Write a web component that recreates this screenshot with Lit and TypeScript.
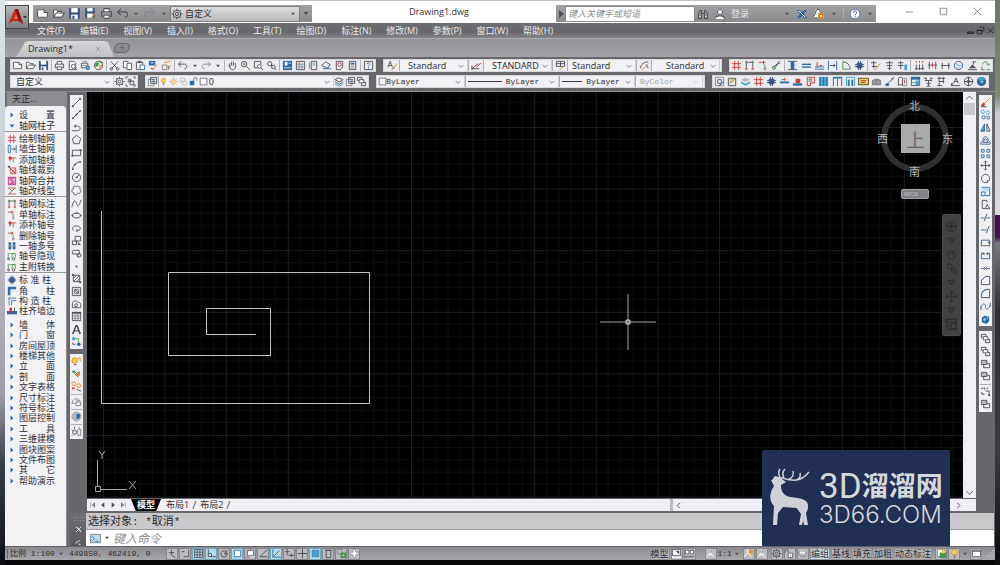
import { LitElement, html, svg, css, nothing, type TemplateResult } from "lit";
import { customElement, state } from "lit/decorators.js";

/* ---------- icon set ----------
   Each icon is a list of strokes on a 12 x 12 grid, separated by "|".
   First letter = colour, "!" = filled shape, "@x,y,r" = circle. */
const INK: Record<string, string> = {
  k: "#505057", g: "#85858c", l: "#b9b9bf", w: "#ffffff", r: "#cc3a3a", b: "#2c6aa8",
  c: "#45a5cf", n: "#3f9a4a", o: "#de8f2c", y: "#f2cf4a", m: "#d9479a", v: "#3f5688", s: "#b9dcec",
};

const GRID = "r M4 1V11M8 1V11M1 4H11M1 8H11";
const SHEET = "w! M2 1H8L10 3V11H2Z|k M2.5 1.5H7.5L9.5 3.5V10.5H2.5Z";
const ICONS: Record<string, string> = {
  new: "w! M1 2H8L11 5V10H1Z|k M1.5 2.5H7.5L10.5 5V9.5H1.5Z|k M7.5 2.5V5H10.5",
  open: "w! M1 2H5L6 4H10V9H1Z|k M1.5 9.5V2.5H4.5L5.5 4H9V5.5|k M1.5 9.5L4 5.5H11.5L9 9.5Z",
  save: "v! M1 1H11V11H1Z|w! M3 1H9V5H3Z|w! M3 7H9V11H3Z|v! M4 8H6V11H4Z",
  saveas: "v! M1 1H10V10H1Z|w! M3 1H8V4H3Z|w! M3 6H8V10H3Z|o M6 11L11 5",
  print: "w! M3 1H9V5H3Z|k M3.5 4.5V1.5H8.5V4.5|k M1.5 4.5H10.5V8.5H1.5Z|w! M3 7H9V11H3Z|k M3.5 7.5H8.5V10.5H3.5Z",
  preview: SHEET + "|w! @7,7,2.5|k @7,7,2.2|k M8.5 8.5L11 11",
  publish: "k M1.5 3.5H8.5V8.5H1.5Z|g M3 1.5H7V3M3 6H7|b! @8.5,8.5,2.4|w M7.5 8.5H9.5",
  globe: "k @6,6,4.5|n! M3 3H7L5 7H2Z|o! M7 5L10 6L7 10Z|k M7 1L11 3",
  cut: "k M2 1.5L9 9M10 1.5L3 9|k @2.5,9.7,1.3|k @9.5,9.7,1.3",
  copy: "w! M1 1H7V9H1Z|k M1.5 1.5H6.5V8.5H1.5Z|w! M5 3H11V11H5Z|k M5.5 3.5H10.5V10.5H5.5Z",
  paste: "k M1.5 2.5H8.5V10.5H1.5Z|k! M3 1H7V3H3Z|w! M5 5H11V11H5Z|b M5.5 5.5H10.5V10.5H5.5Z",
  match: "b! M1 1H8V6H1Z|w M3 3H6|o M5 11L10 5|k M3 9L6 10",
  block: "g M1.5 5.5H6.5V10.5H1.5Z|o M3 3L8 2L11 1M6 8L11 6|k M8.5 7V10.5",
  undo: "k M4.5 1.5L1.5 4.5L4.5 7.5M1.5 4.5H8C11.5 4.5 11.5 9.5 8 9.5",
  redo: "g M7.5 1.5L10.5 4.5L7.5 7.5M10.5 4.5H4C.5 4.5 .5 9.5 4 9.5",
  dot: "k! M3 4H9L6 8Z",
  pan: "k M3 7L1.5 5.5M3 8V3.5M5 6V1.8M7 6V2M9 6V3.2M3 7C3.5 12 9.5 12 9.5 6",
  zoom: "k @4.5,4.5,3|k M7 7L11 11|n M3 4.5H6M4.5 3V6",
  zoomwin: "k M1.5 1.5H8.5V8.5H1.5Z|w! @7,7,2.5|k @7,7,2|k M8.5 8.5L11 11",
  zoomprev: "k @4,4,2.3|k @8,7.5,2|k M5.5 5.5L7 7M9.5 9L11 11",
  props: "b! M1 1H11V11H1Z|w! M3 2H6V6H3Z|s M2 8.5H10M7 3.5H10",
  center: "k M1.5 1.5H10.5V10.5H1.5Z|g M1.5 4.5H10.5M4.5 1.5V10.5M7.5 4.5V10.5M1.5 7.5H10.5",
  palette: "k M3.5 1.5H9.5V10.5H3.5Z|c M5 3.5H8M5 5.5H8|g M1.5 2.5V9.5",
  sheetset: "k M1 6L5 2L10 5L7 9Z|b M2 9.5H11",
  markup: "k M2.5 1.5H9.5V7.5L7 10.5H2.5Z|r @6,5,2",
  calc: "k M2.5 1.5H9.5V10.5H2.5Z|b! M4 3H8V5H4Z|g M4 6.7H8M4 8.7H8",
  help: "k M1.5 1.5H10.5V10.5H1.5Z|b M4.5 4.5C4.5 2.5 7.5 2.5 7.5 4.5C7.5 5.5 6 5.5 6 7M6 8V9.4",
  textstyle: "k M1 8L3.5 1.5L6 8M2 6H5|o M5 11L11 4|k M6 10L8 8",
  dimstyle: "k M1 9.5H9M1 6V11M1 9.5L8 4|r M6 8L11 3",
  tblstyle: "k M1.5 1.5H10.5V7H1.5ZM1.5 4H10.5M6 1.5V7|o M5 11L10 6",
  mlstyle: "k M2 9C1 5 6 2 10 2|o M3 11L10 4|k M8 5L10 9",
  axis: GRID,
  axisdim: "k M2 2.5H10M2.5 2V8M9.5 2V8|r @2.5,9.5,1|r @9.5,9.5,1|n @2.5,2,.8|n @9.5,2,.8",
  axisone: "r M1 2.5H8M6 1V5|n M7.5 5V9|g @7.5,9.7,1.2",
  axisadd: "r M1 3.5H11M3.5 1V8|r! @4,4,1.8|n M7.5 3V9",
  trim: "k M1 8L10 3M3 11L9 1|n @3,9,1.4",
  ibeam: "k M1 1.5H11M1 10.5H11|b! M4 2H8V10H4Z",
  wall: "b! M1 4H11V5.5H1Z|b! M1 7H11V8.5H1Z",
  wall2: "b M1 10H11M1 7.5H11|r M3.5 2V8M6 6H9",
  wall3: "b M1.5 1V11M10.5 1V11|k M3 6H9M7 4.5L9 6L7 7.5",
  arcwall: "n M2 2V10H10|k M2 2C7 2 10 6 10 10",
  column: "v! M3 3H9V9H3Z|v M1 5H11M1 7H11M5 1V11M7 1V11",
  edit1: "k M1 3H7M4 1V9M2 7H8|o M5 11L11 4",
  edit2: "k M2 3H10M3 6H9M6 1V11M4 9H8",
  edit3: "k M1 3H7M4 1V10M1 6H7|c! M8 5H11V11H8Z",
  dims3: "k M2.5 5V11M6 5V11M9.5 5V11|r M2.5 1V3M6 1V3M9.5 1V3|k M1 9.5H11",
  dims2: "k M2.5 2V10M9.5 2V10M1 5.5H11|r M6 3V8",
  dims1: "k M2.5 3V10M9.5 3V10M1 6H11",
  clock: "v @6,6,4.5|c M3.5 4L6 6H9|l M4 8.5H8",
  elev: "k! M2 9L6 5L10 9Z|k M6 2H10M1 10.5H11M7 2V5",
  recycle: "n M3 5C3 1 9 1 9 5M7 4L9 6L11 4M1 10.5H5M7 10.5H11M2 7V10",
  layers: "k M1 4L5 2L10 4L6 6.5ZM1 6.5L6 9L10 6.5|c M1 9L6 11L10 9",
  layerst: "g M1.5 3.5H7.5V10.5H1.5Z|k M4 1.5H10.5V8H4Z|b M5 4H9M5 6H9",
  bulb: "o @6,4.5,3|y! @6,4.5,2.6|k M5 8.5H7M5 10.5H7",
  sun: "o @6,6,2.3|o M6 .5V2.5M6 9.5V11.5M.5 6H2.5M9.5 6H11.5M2 2L3.3 3.3M8.7 8.7L10 10M10 2L8.7 3.3M2 10L3.3 8.7",
  vp: "l M1.5 1.5H7.5V6.5H1.5ZM4.5 5.5H10.5V10.5H4.5Z",
  lock: "b! M1 5H7V11H1Z|k M6.5 5V2.5C6.5 0 10.5 0 10.5 2.5V5",
  sq: "w! M1 1H11V11H1Z|k M1.5 1.5H10.5V10.5H1.5Z",
  gear: "k @6,6,1.6|k @6,6,3.7|k M6 .7V2.3M6 9.7V11.3M.7 6H2.3M9.7 6H11.3M2.2 2.2L3.4 3.4M8.6 8.6L9.8 9.8M9.8 2.2L8.6 3.4M2.2 9.8L3.4 8.6",
  group: "k M1 3V1H3M9 1H11V3M11 9V11H9M3 11H1V9|g! M3 3H7V7H3Z|k M5.5 5.5H9.5V9.5H5.5Z",
  pic: "g M1.5 1.5H10.5V10.5H1.5Z|b M4 4H8V8H4Z|k M5 11L11 6",
  pic2: "k M1.5 2.5H9.5V10.5H1.5Z|n M3 8L9 3|o @5,5,1.5",
  stack: "l! M1 4L6 2L11 4L6 6.5Z|c! M1 6L6 8.5L11 6V8L6 10.5L1 8Z",
  wallb: "b! M1 6H11V8H1Z|b M3 4H7|r M6 2V5",
  wallr: "r! M4 3H9V8H4Z|b! M1 8H11V10.5H1Z",
  door: "r M2.5 1.5H10.5V7.5H6V10.5H2.5Z|k M4 3.5H8M4 5.5H8",
  cols: "c! M1 1H11V11H1Z|b M2.5 1V11M6 1V11M9.5 1V11",
  door2: "c! M1 1H11V3H1Z|b M1.5 11V1.5H10.5V11M6 3V11",
  win: "c M1.5 11V1.5H10.5V11|b! M3 4H5V11H3Z|b! M7 4H9V11H7Z",
  mail: "y! M0 2H12V10H0Z|k M.5 2.5H11.5V9.5H.5Z|r M3 5H9|k M3 7H8",
  house: "g! M1 5L4 3H8L11 5V10H1Z|l! M3 6H5V8H3Z|l! M7 6H9V8H7Z",
  slope: "k M1 9.5H6M8 3L11 2|b M3 9L10 3|b! M2 8H5V11H2Z",
  book: "k M1.5 2.5C3 1 5 1 6 2.5V10.5C5 9 3 9 1.5 10.5Z|g M6 2.5H10.5V10.5H6|r M8.3 4V8",
  table: "k M1.5 1.5H10.5V10.5H1.5Z|b! M1 1H11V4H1Z|c! M6 5H10V10H6Z|g M1.5 7H6",
  fan: "k M1 2.5H4M8 2.5H11M2 5H10M6 5V11M3.5 8H8.5M4 11H8M3 2L4 5M9 2L8 5",
  flag: "k M3.5 1V11M1.5 2.5H10M3.5 6H9M1.5 10.5H7M8 1V8",
  txa: "k M4 8L6.5 2L9 8M5 6H8M1 10.5H11|k! M1 8H3V10H1Z",
  target: "k @6,6,4.5|k @6,6,1.5|k M6 1V11M1 6H11",
  help3d: "b! @6,6,5|c! M2 3L7 1L10 4L5 6Z|w! M5 6H8V7H5Z",
  wallgen: "b M1.5 1.5H4V10.5H1.5ZM11 1V11|k M5 6H10M8 4.5L10 6L8 7.5",
  axiscut: "k! M1 1H4V3H1Z|k M2 2L10 10|r M4.5 3.5H10.5V10.5H4.5Z|r M6 9L10 4M8 10L10 7",
  axismerge: "m! M1 1H11V11H1Z|w M3.5 3V9M8.5 3V9M2 7H6M6 4H10",
  axisline: "r M1 2.5H11M1 9.5H11|k M3 9L9 3|g M3 3L6 6",
  axischeck: "n M1.5 2V9M6 5V9|k @2,9.5,1.2|k @8,9.5,1.5|n M3 3H10V8M6 5L9 2",
  axisnum: "b! @3.5,3,1.8|b! @8.5,3,1.8|b! @3.5,8.5,1.8|b! @8.5,8.5,1.8|v M3.5 3V9M8.5 3V9M1 6H11",
  angle: "b! M1 1H11V4H4V11H1Z|c M2 7H4M7 2V4",
  column3: "b M2 2.5H11M2.5 2V11M5.5 5.5H11M5.5 5.5V11",
  colalign: "b! M0 6H12V10H0Z|r! M3 2H6V9H3Z|k M9 2V8",
  line: "k M2 10L10 2|k! M1 9H3V11H1Z|k! M9 1H11V3H9Z",
  xline: "k M2 10L10 2|k! @6,6,1.2|k! @2,10,1|k! @10,2,1",
  pline: "k M1 9.5H7C11 9.5 11 4.5 7 4.5H4M5.5 3L3.5 4.5L5.5 6",
  polygon: "k M6 1.5L10.5 5L9 10.5H3L1.5 5Z",
  rect: "k M1.5 3.5H10.5V9.5H1.5Z|k! M.5 8.5H2.5V10.5H.5Z|k! M9.5 2.5H11.5V4.5H9.5Z",
  arc: "k M2 10C2 6 5 3 10 2|k! @2,10,1|k! @10,2,1|k! @4.4,5,1",
  circle: "k @6,6,4.5|k M6 6L9 3|k! @6,6,1",
  cloud: "k M3 4C1 1 5 .5 6 2C8 .5 11 2 9.5 4.5C12 6 10 10 7.5 9C6 12 2 11 3 8.5C0 8 .5 4 3 4Z",
  spline: "k M1 10C3 1 5 2 6 6C7 10 9 9 11 2",
  ellipse: "k M1.5 6C1.5 2.5 10.5 2.5 10.5 6C10.5 9.5 1.5 9.5 1.5 6Z|k! @6,3.4,1|k! @10.5,6,1|k! @1.5,6,1",
  earc: "k M3 8.5C-1 5 4 2 8 3.5C12 5 10 9 6 8.5M7 7L5.5 8.5L7 10",
  insert: "k M4.5 1.5H10.5V6.5H4.5Z|k M1.5 6.5H6V10.5H1.5Z|k! M7 7L11 11H8Z",
  mkblock: "k M2.5 2.5H9V6.5H1.5V4ZM6 7L8 10.5|k @9,8,1.8",
  point: "k! M5 5H7V7H5Z",
  hatch: "k M2.5 2.5H9.5V9.5H2.5ZM2.5 6L6 2.5M3 9L9 3M6 9.5L9.5 6|k! M1 1H3V3H1Z|k! M9 9H11V11H9Z",
  grad: "g! M3 3H9V9H3Z|k M1.5 1.5H10.5V10.5H1.5Z|w M4 8L8 4",
  region: "k M1.5 9.5V4.5C1.5 2 6 1 7 3.5C10 3 11 5 10.5 9.5Z|k @5.5,6.8,1.6",
  tbl: "k M1.5 1.5H10.5V10.5H1.5Z|k! M1 1H11V3H1Z|g M4.5 3V10M7.5 3V10M1.5 5.5H10.5M1.5 8H10.5",
  mtext: "k! M4.9 1H7.1L11 11H9L8.1 8.3H3.9L3 11H1ZM4.4 6.7H7.6L6 2.6Z",
  addsel: "c! @3,3,2|n M5 3H8V7|b! @8.5,9,2|k M2 7V9H5",
  iso1: "y! @4,5,3|o @4,5,3|o M7 3L10 2V6|k M3 9.5H6",
  iso2: "k M3 2L6 5L10 3M4 5L8 9|o! @8,6,2|n! @3,3,1.5",
  iso3: "o @3,3,2|o @8.5,5,2|r! M1 7H4V9H1Z|k M6 9L11 11",
  locklay: "g M1 8C2 3 6 2 8 4M1 8H5|g M5.5 6.5H10.5V10.5H5.5ZM6.5 6V4.5H9.5V6",
  world: "g @6,6,4.8|l! @6,6,4.4|b! M6 3L10 3.5L9.5 8L6 9Z",
  sunx: "k @4,7,2.2|k M4 1V3.5M1 4L2.5 5.5M1 10.5L2 9.5|g M7.5 3.5H10.5V10.5H7.5ZM9 1V3",
  erase: "o M4 8L11 1|r! M1 9L4 6L6 8L3 11Z|k M1 10.5H7",
  copyo: "c @3,3,1.8|c @8.5,4,1.8|b @4,9,1.8|b @9,9.3,1.6",
  mirror: "c! M5 2V10H1Z|b M5 2V10H1Z|k M7.5 2V10H11Z",
  offset: "b M1 10H11V8C11 7 9 7 9 6C9 .5 3 .5 3 6C3 7 1 7 1 8Z|k M3 8H9C7 7 8 4 6 4C4 4 5 7 3 8",
  array: "b M1.5 1.5H4.5V4.5H1.5ZM7.5 1.5H10.5V4.5H7.5ZM1.5 7.5H4.5V10.5H1.5ZM7.5 7.5H10.5V10.5H7.5Z",
  move: "k M6 1V11M1 6H11M4.5 2.5L6 1L7.5 2.5M4.5 9.5L6 11L7.5 9.5M2.5 4.5L1 6L2.5 7.5M9.5 4.5L11 6L9.5 7.5",
  rotate: "k M5 10.5C-1 8 2 1.5 6 1.5C11 1.5 12 8 8 10M8 7.5V10.5H5",
  scale: "b M1.5 1.5H10.5V10.5H6|b M1.5 10.5V6.5H5.5V10.5Z|s! M2 2H10V6H6V5H2Z",
  stretch: "k M2.5 1.5H7.5V4M2.5 1.5V10.5H10.5L7.5 5.5|b M6 10L8 6",
  trimm: "b M1 6.5H5M7 6.5H11|k M4.5 10L7.5 2",
  extend: "b M1 6.5H7|k M7 10L10 2",
  brkpt: "b M1.5 9.5V3.5H10.5V9.5|w! M2 8H10V11H2Z|k! M9 5H11V7H9Z|k M1 9.5H11",
  brk: "b M4 3.5H1.5V9.5H10.5V3.5H8|k! M3 3H5V5H3Z|k! M7 3H9V5H7Z",
  join: "b M1 6H4M8 6H11|k M4 4.5L6 6L4 7.5M8 4.5L6 6L8 7.5",
  chamfer: "k M1.5 10.5H10.5V1.5H6L1.5 6Z|b M6 1.5L1.5 6",
  fillet: "k M1.5 10.5H10.5V1.5H8C4 1.5 1.5 5 1.5 8Z|b M8 1.5C4 1.5 1.5 5 1.5 8",
  blend: "k M1 10V6M11 2V6|b M1 7C4 0 6 4 6 6C6 9 8 11 11 5",
  explode: "b! M2 4L5 2L10 3V8L7 11L2 9Z|s! @5,6,1.3|s M7 5L9 4",
  order: "k M1.5 1.5H6.5V5H1.5Z|w! M3 4H9V8H3Z|k M3.5 4H8.5V7.5H3.5Z|k M6 8V10.5H10.5V7H8.5",
  order2: "l! M2 2H8V6H2Z|k M1.5 1.5H7.5V6H1.5Z|k M4 6V9.5H10.5V5H8",
  ordertx: "k M1 2.5H4M5 1.5V4M7 2.5H9M2 6.5V9H5M6 5.5H10V9.5|k! @10,10,1.2",
  snap: "k M5 2V8M2 5H8M5 8L9 10",
  snap2: "k M9.5 2V9.5H4M2 4H5",
  mesh: "k M1.5 1.5H10.5V10.5H1.5ZM4.5 1.5V10.5M7.5 1.5V10.5M1.5 4.5H10.5M1.5 7.5H10.5",
  ortho: "k M2.5 1.5V9.5H11|b M2.5 6H6V9.5",
  polar: "k @5.5,6.5,3.5|k M5.5 6.5L10 2M5.5 6.5H9",
  osnap: "w! M2 2H10V10H2Z|b M2.5 2.5H9.5V9.5H2.5Z",
  osnap3: "w! M2 2H10V10H2Z|k M2.5 2.5H9.5V8.5H2.5Z|r M1 10H5",
  ang: "k M10 2L2 9.5H10.5",
  ucsd: "b M2 1.5V10H11M2 10L9 3|o M5 5L8 8",
  dyn: "k M1 4H6M3.5 1V8M5 8H11M8 6V10",
  plus: "k M6 1V11M1 6H11M6 4V8",
  tpy: "b M2.5 2.5H9.5V9.5H2.5Z|c! M3 3H9V9H3Z",
  qp: "k M3.5 2.5H8.5V10.5H3.5ZM2 2.5H10",
  sc: "g M1.5 1.5H6.5V6.5H1.5Z|n! M5 5H11V11H5Z|w M7 8H9",
  bigplus: "w! M4 1H8V4H11V8H8V11H4V8H1V4H4Z|g M4.5 1.5H7.5V4.5H10.5V7.5H7.5V10.5H4.5V7.5H1.5V4.5H4.5Z",
  mview: "w! M1 1H11V11H1Z|k M1.5 1.5H10.5V8.5H1.5Z|k! M5 3H9V7Z",
  qview: "w! M1 2H11V7H1Z|k M1.5 2.5H5.5V6.5H1.5ZM6.5 2.5H10.5V6.5H6.5ZM1 9.5H11",
  anno: "w M6 1V5L2 10M6 5L10 10M4 7.5H8|g M6.5 2V5",
  annob: "w M5 1V5L1 10M5 5L9 10|o! @9,4,2|y! @8,7,1.5",
  unlock: "w! M4 5H10V11H4Z|k M4.5 5.5H9.5V10.5H4.5ZM4.5 5V3C4.5 1 1.5 1 1.5 3V5|g M7 7V9",
  iso: "g M1.5 4.5C1.5 11 10.5 11 10.5 4.5Z|w! M3 4H9V6H3Z",
  hw: "w! M1 1H10V9H1Z|g M1.5 1.5H9.5V9.5H1.5Z|n! M4 5H11V11H4Z|y! @8,4,2",
  clean: "w! M1 2H11V10H1Z|k M1.5 2.5H10.5V9.5H1.5Z|k M1 3.5H11",
  grip: "l! M9 2H11V4H9Z|l! M6 5H8V7H6Z|l! M9 5H11V7H9Z|l! M3 8H5V10H3Z|l! M6 8H8V10H6Z|l! M9 8H11V10H9Z",
  bino: "k M1.5 10.5V6L3 2.5H4.5V10.5ZM10.5 10.5V6L9 2.5H7.5V10.5ZM4.5 5.5H7.5|w M2.5 8.5H3.5M8.5 8.5H9.5",
  user: "w! @6,4,3|k @6,4,2.6|w! M1 11C1 8 11 8 11 11Z|k M1 10.5C2 8 4 8.5 5 7M7 7C8 8.5 10 8 11 10.5Z",
  xch: "b! M1 2H4L6 4.5L8 2H11L8 6L11 10H8L6 7.5L4 10H1L4 6Z|w M3 3L9 9",
  share: "w! M3 1H7L8 5L6 9H1V7Z|k M3.5 1.5H6.5L7.5 5M1 8.5L3.5 2|o! M5 5H11V11H5Z|w! M7 7H9V9H7Z",
  qhelp: "w! @6,6,5.4|v @6,6,5|v M4.3 4.8C4.3 2.4 7.7 2.4 7.7 4.7C7.7 6 6 5.9 6 7.3M6 8.3V9.6",
  mdimin: "k! M2 8H10V10H2Z",
  mdirest: "k M4.5 1.5H10.5V6.5H8M1.5 5.5H7.5V10.5H1.5ZM1.5 6H7.5",
  close: "k M2.5 2.5L9.5 9.5M9.5 2.5L2.5 9.5",
  thinmin: "g M2 6.5H10",
  thinmax: "g M2.5 2.5H9.5V9.5H2.5Z",
  thinclose: "g M2 2L10 10M10 2L2 10",
  wrench: "w M3 9C1 6 7 7 8 4M6 9.5H8V11",
  wclose: "w M2.5 2.5L9.5 9.5M9.5 2.5L2.5 9.5M3.5 2.5L9.5 8.5",
  first: "g M2.5 2V10|g! M9 2V10L4 6Z",
  prev: "k! M8 2V10L3 6Z",
  next: "k! M4 2V10L9 6Z",
  last: "g M9.5 2V10|g! M3 2V10L8 6Z",
  left: "k M7.5 3L4.5 6L7.5 9",
  right: "k M4.5 3L7.5 6L4.5 9",
  up: "k M2.5 8L6 4.5L9.5 8",
  down: "k M2.5 4.5L6 8L9.5 4.5",
  prompt: "s! M0 1H12V11H0Z|g M.5 1.5H11.5V10.5H.5Z|b M2.5 3.5L5 6L2.5 8.5M6 9H9",
  folded: "b! M3 1L9 6L3 11Z",
  unfolded: "b! M1 3H11L6 9Z",
};

const circle = (_: string, x: string, y: string, r: string) =>
  `M${+x - +r} ${y}a${r} ${r} 0 1 0 ${2 * +r} 0a${r} ${r} 0 1 0 ${-2 * +r} 0Z`;

const icon = (name: string): TemplateResult => html`<svg class="ic" viewBox="0 0 12 12" aria-hidden="true">
  ${(ICONS[name] ?? "").split("|").map((part) => {
    const ink = INK[part[0]];
    const fill = part[1] === "!";
    const d = part.slice(fill ? 2 : 1).trim().replace(/@([\d.]+),([\d.]+),([\d.]+)/g, circle);
    return svg`<path d=${d} fill=${fill ? ink : "none"} stroke=${fill ? "none" : ink}></path>`;
  })}
</svg>`;

/* "|" in a list of names stands for a separator. */
const strip = (names: string) =>
  names.split(" ").map((n) =>
    n === "|" ? html`<i class="sep"></i>`
      : html`<button class=${n === "dot" ? "tool tiny" : "tool"} aria-label=${n}>${icon(n)}</button>`);

type Row = [string, string];
const TREE: Row[][] = [
  [["folded", "设　　置"], ["unfolded", "轴网柱子"]],
  [["axis", "绘制轴网"], ["wallgen", "墙生轴网"], ["axisadd", "添加轴线"], ["axiscut", "轴线裁剪"],
   ["axismerge", "轴网合并"], ["axisline", "轴改线型"]],
  [["axisdim", "轴网标注"], ["axisone", "单轴标注"], ["axisadd", "添补轴号"], ["axisone", "删除轴号"],
   ["axisnum", "一轴多号"], ["axischeck", "轴号隐现"], ["axischeck", "主附转换"]],
  [["column", "标 准 柱"], ["angle", "角　　柱"], ["column3", "构 造 柱"], ["colalign", "柱齐墙边"]],
  ["墙　　体", "门　　窗", "房间屋顶", "楼梯其他", "立　　面", "剖　　面", "文字表格", "尺寸标注", "符号标注",
   "图层控制", "工　　具", "三维建模", "图块图案", "文件布图", "其　　它", "帮助演示"].map((t): Row => ["folded", t]),
];

const MENUS = ["文件(F)", "编辑(E)", "视图(V)", "插入(I)", "格式(O)", "工具(T)", "绘图(D)", "标注(N)", "修改(M)",
  "参数(P)", "窗口(W)", "帮助(H)"];

@customElement("app-root")
export class AppRoot extends LitElement {
  @state() private layout = "模型";

  static styles = css`
    :host {
      display: block;
      font: 9px/10px "Open Sans", "Noto Sans CJK SC", sans-serif;
      color: #2c2c30;
    }
    * { box-sizing: border-box; }
    button, input, select { font: inherit; color: inherit; border: 0; margin: 0; padding: 0; background: none; border-radius: 0; }
    button { display: flex; align-items: center; justify-content: center; white-space: nowrap; }
    ul { list-style: none; margin: 0; padding: 0; }
    .ic { display: block; width: 11px; height: 11px; flex: none; stroke-width: 1; }
    .desktop {
      height: 100vh; padding: 0 5px 5px; display: flex;
      background:
        linear-gradient(#d9e8e8, #ccd6da 20%, #bfbcc8 45%, #9c9aa6 70%, #39404c 82%, #0b0d12) left / 5px 100% no-repeat,
        linear-gradient(#6f7660, #81896f 17%, #c9cbd0 20%, #d9dbe0 38%, #4a0b58 38%, #4a0b58 42%, #77787e 43%, #2f3135 55%, #3a3c40 80%, #0c0c0e) right / 5px 100% no-repeat,
        #050608;
    }
    .app { flex: 1; min-width: 0; display: flex; flex-direction: column; background: #68676b; }

    /* title */
    .title { display: flex; height: 23px; background: #fff; border-top: 1px solid #b9c6c8; position: relative; }
    .logo {
      position: absolute; z-index: 1; left: 0; top: 4px; width: 24px; height: 24px;
      border: 1px solid #46464a; background: linear-gradient(#b5b5b8, #7e7e82);
    }
    .logo svg { width: 20px; height: 20px; }
    .qat {
      margin: 4px 0 1px 28px; width: 279px; display: flex; align-items: center;
      background: linear-gradient(#a2a2a5, #8b8b8e);
    }
    .qat .ic { width: 13px; height: 13px; }
    .quick { flex: 1; display: flex; align-items: center; justify-content: space-between; padding: 0 2px; }
    .quick .tool { width: 14px; }
    .quick .tiny { width: 9px; }
    .tiny .ic, .qat .tiny .ic, .combo .arrow .ic { width: 8px; height: 8px; }
    .more { width: 12px; height: 100%; }
    .more .ic { width: 10px; }
    .doc { flex: 1; text-align: center; padding: 6px 0 0 10px; margin: 0; font: inherit; }
    .info { margin: 4px 0 1px; width: 320px; display: flex; align-items: center; background: linear-gradient(#a2a2a5, #8b8b8e); }
    .info .ic { width: 12px; height: 12px; }
    .info input { width: 130px; height: 16px; background: #fff; border: 1px solid #8a8a8e; padding: 0 2px; }
    input::placeholder { color: #8c8c90; font-style: italic; opacity: 1; }
    .info .go { width: 9px; height: 100%; }
    .info .rest { flex: 1; display: flex; align-items: center; padding: 0 2px; gap: 5px; }
    .info .tiny .ic { width: 8px; height: 8px; }
    .login { color: #e4e4e6; }
    .push { margin-left: auto; }
    .wins { width: 119px; display: flex; justify-content: space-between; padding: 4px 12px 0 28px; align-items: flex-start; }

    /* menu and document tabs */
    .menu {
      height: 15px; display: flex; align-items: center; padding: 0 0 0 32px; color: #ececee;
      background: linear-gradient(#6e6e72, #68686c 60%, #858589);
    }
    .menu ul { display: flex; gap: 15px; flex: 1; }
    .mdi { display: flex; gap: 1px; }
    .mdi .ic { width: 9px; height: 9px; }
    .mdi path { stroke: #1c1c20; }
    .docs { height: 19px; display: flex; align-items: flex-end; padding-left: 10px; background: linear-gradient(#959498, #a3a2a6); border-top: 1px solid #a9a9ad; }
    .doctab {
      width: 99px; height: 16px; display: flex; align-items: center; justify-content: space-between;
      padding: 0 12px 0 13px; background: linear-gradient(#d6d6d9, #c0c0c4);
      clip-path: polygon(0 100%, 3% 85%, 10% 8%, 13% 0, 90% 0, 94% 8%, 100% 100%);
    }
    .doctab .ic { width: 8px; height: 8px; opacity: .5; }
    .addtab { width: 16px; height: 10px; margin: 0 0 4px; background: #8a898d; border: 1px solid #67676b; border-radius: 6px 4px 6px 2px; color: #5a5a5e; }

    /* toolbars */
    .bars { display: grid; gap: 3px; padding: 2px 2px 3px 5px; border-bottom: 1px solid #8b8b8f; }
    .line { display: grid; gap: 7px; }
    .line.one { grid-template-columns: 366fr 339fr 264fr; }
    .line.two { grid-template-columns: 128fr 225fr 329fr 278fr; padding-right: 4px; }
    .bar { min-width: 0; height: 13px; display: flex; align-items: center; justify-content: space-between; padding: 0 1px; background: #ecebee; border: 1px solid #d9d8dc; overflow: hidden; }
    .tool { height: 12px; flex: none; }
    .styles .tool { width: 14px; }
    .sep { width: 1px; height: 11px; background: #b0afb4; flex: none; }
    .combo { display: grid; align-items: center; min-width: 0; }
    .bar .combo { flex: 1 1 0; height: 11px; background: #f1f0f3; border-right: 1px solid #d0cfd3; }
    .bar .f86 { flex-grow: 86; }
    .bar .f92 { flex-grow: 93; }
    .bar .f75 { flex-grow: 74; }
    .bar .f66 { flex-grow: 66; }
    .combo > * { grid-area: 1 / 1; }
    .combo select { width: 100%; appearance: none; padding-left: 4px; outline: 0; overflow: hidden; opacity: 1; }
    .combo .arrow { justify-self: end; pointer-events: none; margin-right: 2px; }
    .combo .lead { justify-self: start; pointer-events: none; display: flex; align-items: center; gap: 1px; }
    .combo .lead .ic { width: 9px; height: 9px; }
    .workspace { width: 130px; height: 16px; border: 1px solid #7d7d80; background: linear-gradient(#dcdcde, #b9b9bc); }
    .workspace .lead .ic { width: 12px; height: 12px; }
    .mono select { font: 8px/10px "Liberation Mono", monospace; }
    .stroke { height: 1px; background: #3c3c42; margin-left: 2px; }
    .stroke.w34 { width: 34px; }
    .stroke.w20 { width: 20px; }
    .in8 select { padding-left: 8px; }
    .in14 select { padding-left: 14px; }
    .in40 select { padding-left: 40px; }
    .in26 select { padding-left: 26px; }
    .in50 select { padding-left: 50px; }
    .off { color: #a5a4a9; }
    .off .arrow { opacity: .3; }

    /* middle */
    .work { flex: 1; min-height: 0; display: flex; }
    .palette { width: 62px; display: flex; flex-direction: column; background: #8d8c90; }
    .palette h2 { margin: 0; height: 14px; padding: 2px 0 0 5px; font: inherit; border-left: 2px solid #6d6c70; }
    .tree {
      flex: 1; margin-right: 1px; padding: 4px 0 60px; background: #f2f1f4; border-radius: 4px 4px 0 0;
      display: flex; flex-direction: column; font-family: "Liberation Sans", "Noto Sans CJK SC", sans-serif;
    }
    .tree ul { display: flex; flex-direction: column; flex-basis: 0; }
    .tree ul + ul { border-top: 1px solid #9a999e; padding-top: 2px; }
    .tree ul:last-child { border-color: transparent; }
    .tree li { flex: 1 1 0; min-height: 0; display: flex; align-items: center; gap: 2px; padding-left: 2px; }
    .tree .ic { width: 10px; height: 10px; }
    .tree .leaf .ic { width: 6px; height: 6px; margin: 0 2px; }
    .tree a { color: #303034; text-decoration: none; white-space: nowrap; }
    .center { flex: 1; min-width: 0; display: flex; flex-direction: column; padding-right: 1px; }
    .upper { flex: 1; min-height: 0; display: flex; }
    .side { display: flex; flex-direction: column; gap: 5px; padding: 3px 3px 0; }
    .side.l { width: 20px; padding-right: 4px; }
    .side.r { width: 18px; padding-right: 2px; }
    .vbar { display: flex; flex-direction: column; align-items: center; justify-content: space-between; background: #f0eff2; padding: 1px 0; }
    .vbar .sep { width: 11px; height: 1px; }
    .l .vbar.a { flex: 254; }
    .l .vbar.b { flex: 83; }
    .l::after { content: ""; flex: 69; }
    .r .vbar.a { flex: 231; }
    .r .vbar.b { flex: 79; }
    .r::after { content: ""; flex: 96; }
    .view { flex: 1; min-width: 0; display: grid; grid-template: 1fr 13px / 1fr 13px; padding-bottom: 1px; }
    .model { position: relative; background: #000; overflow: hidden; }
    .model > svg { position: absolute; inset: 0; width: 100%; height: 100%; }
    .cube { position: absolute; right: 12px; top: 9px; width: 72px; height: 108px; color: #b4b4b6; font: 11px/12px "Noto Sans CJK SC", sans-serif; }
    .cube svg { position: absolute; left: 0; top: 0; width: 72px; height: 108px; }
    .cube span, .cube button { position: absolute; }
    .n { left: 30px; top: -2px; }
    .s { left: 30px; top: 64px; }
    .w { left: -2px; top: 31px; }
    .e { right: -2px; top: 31px; }
    .top { left: 22px; top: 23px; width: 29px; height: 29px; background: #aaaaac; color: #66666a; font-size: 18px; }
    .wcs { left: 22px; top: 88px; width: 28px; height: 10px; border: 1px solid #a4a4aa; border-radius: 2px; background: #818186; color: #c0c0c4; font: 6px/8px "Liberation Sans", sans-serif; justify-content: flex-start; padding-left: 2px; }
    .nav { position: absolute; right: 2px; top: 122px; width: 19px; height: 122px; background: #434345; border: 1px solid #4c4c4e; border-radius: 2px; display: flex; flex-direction: column; align-items: center; justify-content: space-around; padding: 4px 0; }
    .nav .ic { width: 13px; height: 13px; }
    .nav path { stroke: #2f2f32; fill: none; }
    .vs { background: #f0eff3; display: flex; flex-direction: column; align-items: center; }
    .vs button { width: 11px; height: 11px; }
    .vs .thumb { width: 11px; height: 12px; background: #c9c8cc; }
    .vs button:last-child { margin-top: auto; }
    .hs { grid-column: 1 / 3; margin-top: 1px; display: flex; align-items: center; background: #f0eff3; overflow: hidden; }
    .hs nav, .hs .track { display: flex; align-items: center; }
    .hs nav { flex: 2; padding-left: 1px; }
    .hs nav .step { width: 10px; }
    .hs nav .step .ic { width: 8px; height: 8px; }
    .lt { height: 12px; padding: 0 6px 0 5px; position: relative; }
    .lt::after { content: "/"; position: absolute; right: -1px; color: #55555a; font-size: 11px; }
    .lt.on { background: #000; color: #fff; padding: 0 6px; margin-left: 3px; font-weight: 700; clip-path: polygon(0 0, 100% 0, 84% 100%, 16% 100%); }
    .lt.on::after { content: none; }
    .hs .track { flex: 1; justify-content: space-between; border-left: 3px solid #bcbbbf; padding: 0 12px 0 0; }

    /* command line */
    .cmd { display: grid; grid-template-columns: 16px 1fr; margin-left: 3px; margin-top: 1px; height: 33px; }
    .grab { background: linear-gradient(#707074, #59595d); display: flex; flex-direction: column; align-items: center; justify-content: space-between; padding-top: 3px; }
    .dots { width: 11px; height: 6px; background: radial-gradient(#9b9ba0 1px, transparent 1px) 0 0 / 3px 3px; }
    .grab .ic { width: 9px; height: 9px; }
    .hist { height: 17px; margin: 0; padding: 3px 2px; background: #c9c8ca; border-bottom: 1px solid #a09fa3; font: 11px/12px "Liberation Mono", "Noto Sans CJK SC", monospace; }
    .ask { height: 16px; display: flex; align-items: center; gap: 2px; padding-left: 4px; background: #fff; }
    .ask input { flex: 1; height: 15px; font-size: 12px; outline: 0; }

    /* status bar */
    .status { height: 14px; display: flex; align-items: center; background: linear-gradient(#8a898d, #a8a7ab); border-top: 1px solid #626165; padding-left: 2px; }
    .mono8 { font: 8px/10px "Liberation Mono", "Noto Sans CJK SC", monospace; white-space: pre; }
    .scale { width: 60px; padding: 0 2px; justify-content: space-between; display: flex; align-items: center; border-left: 1px solid #67666a; }
    .scale .ic { width: 8px; height: 8px; }
    .coord { width: 97px; margin-left: 2px; }
    .tog { display: flex; gap: 1px; }
    .tog button { width: 12px; height: 12px; border: 1px solid #88878b; background: #bcbbbf; overflow: hidden; }
    .tog button.lit { background: #b6dcea; border-color: #6fa6bb; }
    .right { margin-left: auto; display: flex; align-items: center; gap: 1px; }
    .txt { height: 12px; background: #b3b2b6; border: 1px solid #949397; }
    .txt.lit { background: #c4e6ef; }
    .gap { width: 7px; }

    /* site badge laid over the window */
    .badge { position: absolute; right: 50px; bottom: 19px; width: 188px; height: 96px; background: #222f55; color: #d6d8dc; display: flex; align-items: center; padding-left: 4px; }
    .badge svg { width: 50px; height: 60px; flex: none; }
    .badge p { margin: 0; padding: 2px 0 0 3px; white-space: nowrap; }
    .badge b { display: flex; align-items: center; height: 32px; font: 700 27px/32px "Liberation Sans", "Noto Sans CJK SC", sans-serif; }
    .badge b span { font: 400 35px/32px Roboto, sans-serif; }
    .badge small { display: block; font: 300 24px/24px Inter, sans-serif; }
  `;

  private combo(label: string, value: string, cls = "", lead: unknown = nothing, arrow = "down") {
    return html`<label class="combo ${cls}">
      <select aria-label=${label}><option>${value}</option></select>
      ${lead === nothing ? nothing : html`<span class="lead">${lead}</span>`}
      <span class="arrow">${icon(arrow)}</span>
    </label>`;
  }

  private titleBar() {
    return html`<header class="title">
      <button class="logo" aria-label="应用程序菜单">
        <svg viewBox="0 0 20 20">
          <path d="M1 17L8 2H11L16 17L11 14L6 14Z" fill="#c22a1c"></path>
          <path d="M8 2H11L16 17L11 12Z" fill="#8b120c"></path>
          <path d="M7 12L9 7L11 12Z" fill="#e9705c"></path>
          <path d="M16 9H20L18 11.500Z" fill="#333"></path>
        </svg>
      </button>
      <div class="qat">
        <div class="quick">${strip("new open save saveas print undo dot redo dot")}</div>
        ${this.combo("工作空间", "自定义", "workspace in14", icon("gear"), "dot")}
        <button class="more" aria-label="更多">${icon("dot")}</button>
      </div>
      <h1 class="doc">Drawing1.dwg</h1>
      <div class="info">
        <button class="go" aria-label="展开">${icon("next")}</button>
        <input type="search" aria-label="搜索" placeholder="键入关键字或短语">
        <div class="rest">
          ${strip("bino user")}<a class="login">登录</a>
          <span class="push"></span>${strip("dot xch share dot | qhelp dot")}
        </div>
      </div>
      <div class="wins">${strip("thinmin thinmax thinclose")}</div>
    </header>`;
  }

  private toolbars() {
    return html`<div class="bars">
      <div class="line one">
        <div class="bar">${strip("new open save | print preview publish globe | cut copy paste match block | undo dot redo dot | pan zoom zoomwin zoomprev | props center palette sheetset markup calc | help")}</div>
        <div class="bar styles">
          ${strip("textstyle |")}${this.combo("文字样式", "Standard", "in8")}
          ${strip("| dimstyle |")}${this.combo("标注样式", "STANDARD", "in8")}
          ${strip("| tblstyle |")}${this.combo("表格样式", "Standard")}
          ${strip("| mlstyle |")}${this.combo("多重引线样式", "Standard", "in14")}
        </div>
        <div class="bar">${strip("axis axisdim axisone trim | ibeam wall wall2 wall3 arcwall column | edit1 edit2 edit3 | dims3 dims2 dims1 clock elev recycle")}</div>
      </div>
      <div class="line two">
        <div class="bar">${this.combo("工作空间", "自定义")}${strip("gear group")}</div>
        <div class="bar">${strip("layerst |")}
          ${this.combo("图层", "0", "in50", html`${icon("bulb")}${icon("sun")}${icon("vp")}${icon("lock")}${icon("sq")}`)}
          ${strip("layers layerst order")}</div>
        <div class="bar">
          ${this.combo("颜色", "ByLayer", "mono in8 f86", icon("sq"))}${strip("|")}
          ${this.combo("线型", "ByLayer", "mono in40 f92", html`<span class="stroke w34"></span>`)}${strip("|")}
          ${this.combo("线宽", "ByLayer", "mono in26 f75", html`<span class="stroke w20"></span>`)}${strip("|")}
          ${this.combo("打印样式", "ByColor", "mono off f66")}
        </div>
        <div class="bar">${strip("pic pic2 stack axis column wallb wallr door cols door2 win mail house slope book table fan flag txa target help3d")}</div>
      </div>
    </div>`;
  }

  private drawing() {
    const step = 61.6 / 5;
    const minor = [1, 2, 3, 4].map((i) => i * step);
    return html`<div class="model">
      <svg aria-label="图形">
        <defs>
          <pattern id="grid" x="16" y="35" width="61.6" height="61.6" patternUnits="userSpaceOnUse">
            ${minor.map((p) => svg`<path d="M${p} 0V62M0 ${p}H62" stroke="#0e0e10"></path>`)}
            <path d="M.5 0V62M0 .5H62" stroke="#1d1d23"></path>
          </pattern>
        </defs>
        <rect width="100%" height="100%" fill="url(#grid)"></rect>
        <path d="M14.500 119V311.500H282.500V180.500H81.500V263.500H183.500V216.500H119.500V242.500H169" fill="none" stroke="#c4c4c4"></path>
        <path d="M541 202V258M513 230H569" stroke="#a4a4a4" fill="none"></path>
        <path d="M539 228H543V232H539Z" fill="#777" stroke="#ccc"></path>
        <path d="M10.500 368V395M13 397.500H40M8.500 394.500H13.500V399.500H8.500ZM12 359L15 363L18 359M15 363V367M42 389L49 397M49 389L42 397" stroke="#a8a8a8" fill="none"></path>
      </svg>
      <div class="cube">
        <svg viewBox="0 0 72 108"><circle cx="36" cy="37" r="31" fill="none" stroke="#303033" stroke-width="6"></circle></svg>
        <span class="n">北</span><span class="s">南</span><span class="w">西</span><span class="e">东</span>
        <button class="top">上</button>
        <button class="wcs">WCS</button>
      </div>
      <div class="nav">${["target", "dot", "pan", "zoomprev", "dot", "move", "dot", "table"].map((n) => icon(n))}</div>
    </div>`;
  }

  private layoutTabs() {
    return html`<div class="hs">
      <nav>
        ${["first", "prev", "next", "last"].map((n) => html`<button class="step" aria-label=${n}>${icon(n)}</button>`)}
        ${["模型", "布局1", "布局2"].map((t) => html`<button class=${t === this.layout ? "lt on" : "lt"} @click=${() => (this.layout = t)}>${t}</button>`)}
      </nav>
      <div class="track">${strip("left right")}</div>
    </div>`;
  }

  private statusBar() {
    const lit = ["mesh", "ortho", "osnap", "ucsd", "tpy"];
    const toggles = "snap snap2 mesh ortho polar osnap osnap3 ang ucsd dyn plus tpy qp sc bigplus".split(" ");
    const tog = (names: string[]) => html`<div class="tog">${names.map((n) =>
      html`<button class=${lit.includes(n) ? "lit" : ""} aria-label=${n}>${icon(n)}</button>`)}</div>`;
    return html`<footer class="status">
      <button class="scale mono8">比例 1:100${icon("dot")}</button>
      <span class="coord mono8">449850, 462419, 0</span>
      ${tog(toggles)}
      <div class="right">
        <button class="txt">模型</button>${tog(["mview", "qview"])}
        <span class="gap"></span>${tog(["anno"])}<span class="mono8">1:1</span>${strip("dot")}
        <span></span>${tog(["annob", "anno"])}<span></span><span></span>${tog(["gear", "unlock", "iso"])}
        ${["编组", "基线", "填充", "加粗", "动态标注"].map((t) => html`<button class="txt ${t === "编组" ? "lit" : ""}">${t}</button>`)}
        <span></span><span></span>${tog(["hw", "bulb"])}${strip("dot")}${tog(["clean"])}<span></span>${icon("grip")}
      </div>
    </footer>`;
  }

  render() {
    return html`<div class="desktop"><main class="app">
      ${this.titleBar()}
      <div class="menu">
        <ul>${MENUS.map((m) => html`<li>${m}</li>`)}</ul>
        <div class="mdi">${strip("mdimin mdirest close")}</div>
      </div>
      <div class="docs">
        <div class="doctab"><span>Drawing1*</span>${icon("close")}</div>
        <button class="addtab" aria-label="新图形">+</button>
      </div>
      ${this.toolbars()}
      <div class="work">
        <aside class="palette">
          <h2>天正...</h2>
          <div class="tree">
            ${TREE.map((rows) => html`<ul style="flex-grow:${rows.length}">
              ${rows.map(([ic, text]) => html`<li class=${ic.endsWith("folded") ? "leaf" : ""}>${icon(ic)}<a href="#">${text}</a></li>`)}
            </ul>`)}
          </div>
        </aside>
        <div class="center">
          <div class="upper">
            <div class="side l">
              <div class="vbar a">${strip("line xline pline polygon rect arc circle cloud spline ellipse earc insert mkblock point hatch grad region tbl mtext addsel")}</div>
              <div class="vbar b">${strip("iso1 iso2 iso3 | locklay | world | sunx")}</div>
            </div>
            <div class="view">
              ${this.drawing()}
              <div class="vs">
                <button aria-label="向上">${icon("up")}</button><span class="thumb"></span>
                <button aria-label="向下">${icon("down")}</button>
              </div>
              ${this.layoutTabs()}
            </div>
            <div class="side r">
              <div class="vbar a">${strip("erase copyo mirror offset array move rotate scale stretch trimm extend brkpt brk join chamfer fillet blend explode")}</div>
              <div class="vbar b">${strip("order order order2 order2 | ordertx order2")}</div>
            </div>
          </div>
          <div class="cmd">
            <div class="grab"><span class="dots"></span>${icon("wclose")}${icon("wrench")}</div>
            <div>
              <p class="hist">选择对象: *取消*</p>
              <div class="ask">${icon("prompt")}${strip("dot")}<input aria-label="命令" placeholder="键入命令"></div>
            </div>
          </div>
        </div>
      </div>
      ${this.statusBar()}
    </main>
    <div class="badge">
      <svg viewBox="0 0 50 60" aria-hidden="true">
        <path d="M6 12L9 8L13 9L20 14L15 17C15 23 17 27 24 29C32 30 37 30 41 34C43 38 42 42 40 45L42 57H38L35 43L31 40L17 39L12 45L11 57H7L8 38C3 33 3 25 8 18L5 12Z" fill="#cfd1d6"></path>
        <path d="M35 32L39 45L36 57H33L35 46L30 39Z" fill="#cfd1d6"></path>
        <path d="M13 10C17 9 20 12 26 12C33 13 39 9 43 4M14 9C12 6 12 4 14 1M18 10C16 6 17 3 19 1M23 11C26 10 28 7 27 3M31 12C34 10 35 8 34 5" stroke="#cfd1d6" stroke-width="1.500" fill="none"></path>
      </svg>
      <p><b><span>3D</span>溜溜网</b><small>3D66.COM</small></p>
    </div></div>`;
  }
}
